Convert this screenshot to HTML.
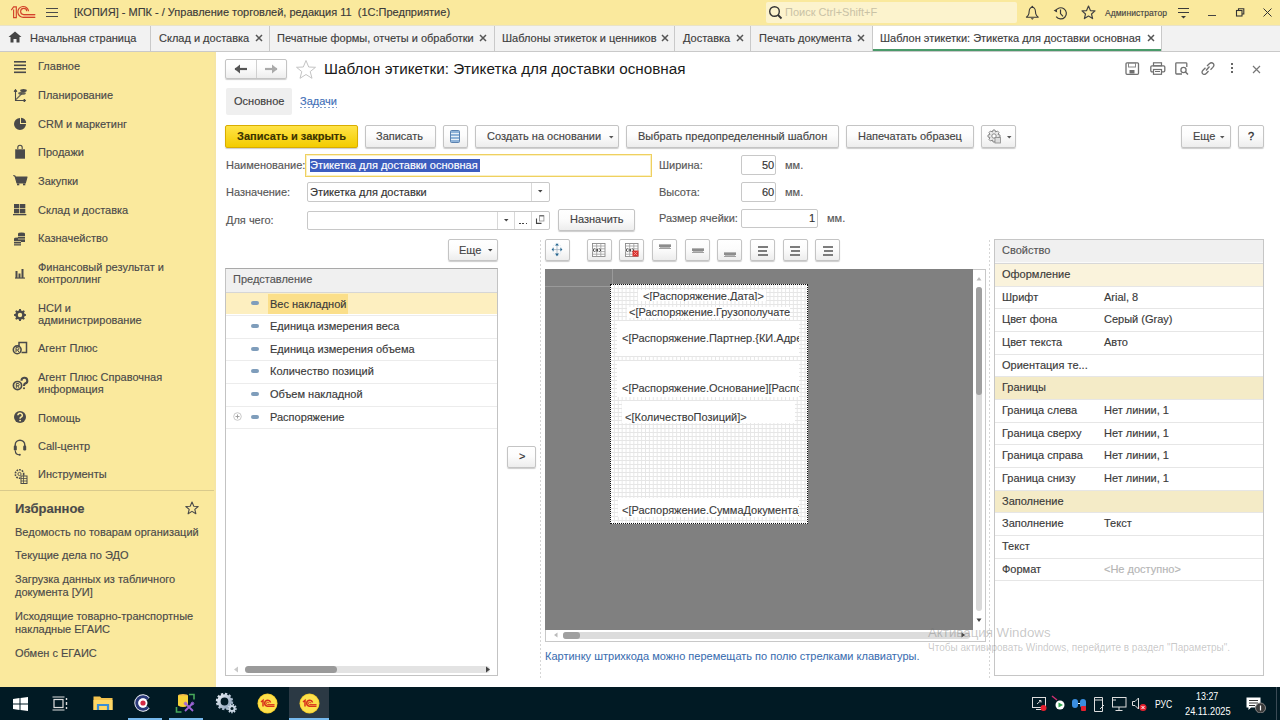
<!DOCTYPE html><html><head><meta charset="utf-8"><style>
*{margin:0;padding:0;box-sizing:border-box}
html,body{width:1280px;height:720px;overflow:hidden;background:#fff;font-family:"Liberation Sans",sans-serif;font-size:11px;color:#333333}
.t{position:absolute;white-space:nowrap;line-height:13px;-webkit-text-stroke:0.15px}
.r{position:absolute}
.btn{position:absolute;border:1px solid #c4c4c4;border-radius:2px;background:linear-gradient(#ffffff 0%,#fcfcfc 45%,#ededed 100%);box-shadow:0 1px 1px rgba(0,0,0,.2)}
.inp{position:absolute;border:1px solid #c8c8c8;border-radius:2px;background:#fff}
</style></head><body><div class="r" style="left:0px;top:0px;width:1280px;height:25px;background:#fae99d"></div><svg class="r" style="left:0px;top:0px;" width="40" height="25" viewBox="0 0 40 25"><g fill="none" stroke="#d2432a" stroke-width="1.15">
<path d="M11.3 10.2 L13.6 6.9 L16.3 6.9 L16.3 17.6 L13.6 17.6 L13.6 9.6"/>
<path d="M28.6 11.3 A5.4 5.4 0 1 0 23.6 17.3 L35.3 17.3"/>
<path d="M26.8 11.2 A3.1 3.1 0 1 0 23.6 14.6 L35.3 14.6"/>
</g><path d="M23.6 15.2 H35 V16.7 H23.6 Z" fill="#f08a70" opacity=".6"/></svg><div class="r" style="left:46px;top:8px;width:12px;height:1.4px;background:#4a4a4a"></div><div class="r" style="left:46px;top:12px;width:12px;height:1.4px;background:#4a4a4a"></div><div class="r" style="left:46px;top:16px;width:12px;height:1.4px;background:#4a4a4a"></div><div class="t" style="left:74px;top:6px;color:#3a3a3a;">[КОПИЯ] - МПК - / Управление торговлей, редакция 11&nbsp; (1С:Предприятие)</div><div class="r" style="left:766px;top:2px;width:251px;height:21px;background:#fcf3cd;border-radius:2px"></div><svg class="r" style="left:768px;top:5px;" width="16" height="16" viewBox="0 0 16 16"><circle cx="6.5" cy="6.5" r="4.8" fill="none" stroke="#333" stroke-width="1.4"/><path d="M10 10 L13.5 13.5" stroke="#333" stroke-width="1.8"/></svg><div class="t" style="left:785px;top:6px;color:#c9c2a6;-webkit-text-stroke:0">Поиск Ctrl+Shift+F</div><svg class="r" style="left:1025px;top:5px;" width="15" height="15" viewBox="0 0 15 15"><circle cx="7.3" cy="1.6" r="0.9" fill="#3a3a3a"/><path d="M7.3 2.3 Q4.6 2.5 4.2 6 L3.9 8.6 Q3.5 10.4 1.4 12.2 H13.2 Q11.1 10.4 10.7 8.6 L10.4 6 Q10 2.5 7.3 2.3 Z" fill="none" stroke="#3a3a3a" stroke-width="1.1" stroke-linejoin="round"/><path d="M5.6 13.2 H9 L7.3 14.8 Z" fill="#3a3a3a"/></svg><svg class="r" style="left:1053px;top:5px;" width="16" height="16" viewBox="0 0 16 16"><path d="M2.6 6.2 A5.6 5.6 0 1 1 3.2 11.6" fill="none" stroke="#3a3a3a" stroke-width="1.2"/><path d="M0.6 5.6 L3.6 3.9 L4.2 7.4 Z" fill="#3a3a3a"/><path d="M7.5 4.6 V8.6 L10 11.4" fill="none" stroke="#3a3a3a" stroke-width="1.2"/></svg><svg class="r" style="left:1081px;top:5px;" width="15" height="15" viewBox="0 0 15 15"><path d="M7.5 1 L9.4 5.6 L14 5.9 L10.5 9 L11.6 13.6 L7.5 11.1 L3.4 13.6 L4.5 9 L1 5.9 L5.6 5.6 Z" fill="none" stroke="#444" stroke-width="1.2" stroke-linejoin="round"/></svg><div class="t" style="left:1105px;top:8px;font-size:8.5px;line-height:10px;color:#444;letter-spacing:0.05px">Администратор</div><div class="r" style="left:1177.5px;top:8px;width:11.5px;height:1.3px;background:#3a3a3a"></div><div class="r" style="left:1177.5px;top:12px;width:11.5px;height:1.3px;background:#3a3a3a"></div><svg class="r" style="left:1181px;top:16px;" width="5" height="3" viewBox="0 0 5 3"><path d="M0 0 L5 0 L2.5 2.6 Z" fill="#3a3a3a"/></svg><div class="r" style="left:1208px;top:15px;width:8px;height:1px;background:#444"></div><svg class="r" style="left:1235px;top:8px;" width="10" height="9" viewBox="0 0 10 9"><rect x="1.5" y="2.5" width="5.5" height="5.5" fill="none" stroke="#333" stroke-width="1.1"/><path d="M3.5 2.5 L3.5 0.8 L8.8 0.8 L8.8 6 L7 6" fill="none" stroke="#333" stroke-width="1.1"/></svg><svg class="r" style="left:1263px;top:8px;" width="9" height="9" viewBox="0 0 9 9"><path d="M0.5 0.5 L8.5 8.5 M8.5 0.5 L0.5 8.5" stroke="#333" stroke-width="1"/></svg><div class="r" style="left:0px;top:25px;width:1280px;height:27px;background:#f2f2f2;border-top:1px solid #e9e3c8;border-bottom:1px solid #c9c9c9"></div><div class="r" style="left:150px;top:26px;width:1px;height:25px;background:#c9c9c9"></div><div class="r" style="left:269px;top:26px;width:1px;height:25px;background:#c9c9c9"></div><div class="r" style="left:494px;top:26px;width:1px;height:25px;background:#c9c9c9"></div><div class="r" style="left:674px;top:26px;width:1px;height:25px;background:#c9c9c9"></div><div class="r" style="left:750px;top:26px;width:1px;height:25px;background:#c9c9c9"></div><div class="r" style="left:872px;top:26px;width:1px;height:25px;background:#c9c9c9"></div><div class="r" style="left:1161px;top:26px;width:1px;height:25px;background:#c9c9c9"></div><div class="r" style="left:873px;top:26px;width:288px;height:25px;background:#fff"></div><div class="r" style="left:873px;top:49px;width:288px;height:2px;background:#4a9a6a"></div><svg class="r" style="left:8px;top:31px;" width="14" height="12" viewBox="0 0 14 12"><path d="M7 0.5 L13.5 6 L11.5 6 L11.5 11.5 L8.5 11.5 L8.5 8 L5.5 8 L5.5 11.5 L2.5 11.5 L2.5 6 L0.5 6 Z" fill="#444"/></svg><div class="t" style="left:30px;top:32px;color:#3d3d3d;">Начальная страница</div><div class="t" style="left:159px;top:32px;color:#3d3d3d;">Склад и доставка</div><svg class="r" style="left:255px;top:34px;" width="8" height="8" viewBox="0 0 8 8"><path d="M1 1 L7 7 M7 1 L1 7" stroke="#555" stroke-width="1.5"/></svg><div class="t" style="left:277px;top:32px;color:#3d3d3d;">Печатные формы, отчеты и обработки</div><svg class="r" style="left:479px;top:34px;" width="8" height="8" viewBox="0 0 8 8"><path d="M1 1 L7 7 M7 1 L1 7" stroke="#555" stroke-width="1.5"/></svg><div class="t" style="left:502px;top:32px;color:#3d3d3d;">Шаблоны этикеток и ценников</div><svg class="r" style="left:661px;top:34px;" width="8" height="8" viewBox="0 0 8 8"><path d="M1 1 L7 7 M7 1 L1 7" stroke="#555" stroke-width="1.5"/></svg><div class="t" style="left:683px;top:32px;color:#3d3d3d;">Доставка</div><svg class="r" style="left:736px;top:34px;" width="8" height="8" viewBox="0 0 8 8"><path d="M1 1 L7 7 M7 1 L1 7" stroke="#555" stroke-width="1.5"/></svg><div class="t" style="left:759px;top:32px;color:#3d3d3d;">Печать документа</div><svg class="r" style="left:857px;top:34px;" width="8" height="8" viewBox="0 0 8 8"><path d="M1 1 L7 7 M7 1 L1 7" stroke="#555" stroke-width="1.5"/></svg><div class="t" style="left:880px;top:32px;color:#3d3d3d;">Шаблон этикетки: Этикетка для доставки основная</div><svg class="r" style="left:1147px;top:34px;" width="8" height="8" viewBox="0 0 8 8"><path d="M1 1 L7 7 M7 1 L1 7" stroke="#555" stroke-width="1.5"/></svg><div class="r" style="left:0px;top:52px;width:216px;height:635px;background:#fae99d"></div><div class="r" style="left:214px;top:52px;width:2px;height:635px;background:#f6e6a4"></div><div class="t" style="left:38px;top:60px;color:#4a4a4a;">Главное</div><div class="t" style="left:38px;top:89px;color:#4a4a4a;">Планирование</div><div class="t" style="left:38px;top:118px;color:#4a4a4a;">CRM и маркетинг</div><div class="t" style="left:38px;top:146px;color:#4a4a4a;">Продажи</div><div class="t" style="left:38px;top:175px;color:#4a4a4a;">Закупки</div><div class="t" style="left:38px;top:204px;color:#4a4a4a;">Склад и доставка</div><div class="t" style="left:38px;top:232px;color:#4a4a4a;">Казначейство</div><div class="t" style="left:38px;top:261px;color:#4a4a4a;">Финансовый результат и</div><div class="t" style="left:38px;top:273px;color:#4a4a4a;">контроллинг</div><div class="t" style="left:38px;top:302px;color:#4a4a4a;">НСИ и</div><div class="t" style="left:38px;top:314px;color:#4a4a4a;">администрирование</div><div class="t" style="left:38px;top:342px;color:#4a4a4a;">Агент Плюс</div><div class="t" style="left:38px;top:371px;color:#4a4a4a;">Агент Плюс Справочная</div><div class="t" style="left:38px;top:383px;color:#4a4a4a;">информация</div><div class="t" style="left:38px;top:412px;color:#4a4a4a;">Помощь</div><div class="t" style="left:38px;top:440px;color:#4a4a4a;">Call-центр</div><div class="t" style="left:38px;top:468px;color:#4a4a4a;">Инструменты</div><div class="r" style="left:0px;top:490px;width:214px;height:1px;background:#d9ca8c"></div><div class="t" style="left:15px;top:501px;font-size:13px;line-height:15px;color:#4a4a4a;font-weight:bold;">Избранное</div><svg class="r" style="left:185px;top:501px;" width="14" height="14" viewBox="0 0 14 14"><path d="M7 1 L8.8 5.2 L13.2 5.5 L9.8 8.4 L10.9 12.8 L7 10.4 L3.1 12.8 L4.2 8.4 L0.8 5.5 L5.2 5.2 Z" fill="none" stroke="#4a4a4a" stroke-width="1.1" stroke-linejoin="round"/></svg><div class="t" style="left:15px;top:526px;color:#4a4a4a;">Ведомость по товарам организаций</div><div class="t" style="left:15px;top:549px;color:#4a4a4a;">Текущие дела по ЭДО</div><div class="t" style="left:15px;top:573px;color:#4a4a4a;">Загрузка данных из табличного</div><div class="t" style="left:15px;top:586px;color:#4a4a4a;">документа [УИ]</div><div class="t" style="left:15px;top:610px;color:#4a4a4a;">Исходящие товарно-транспортные</div><div class="t" style="left:15px;top:623px;color:#4a4a4a;">накладные ЕГАИС</div><div class="t" style="left:15px;top:647px;color:#4a4a4a;">Обмен с ЕГАИС</div><div class="r" style="left:0px;top:687px;width:1280px;height:33px;background:#011a24"></div><div class="btn" style="left:225px;top:59px;width:62px;height:20px"></div><div class="r" style="left:256px;top:60px;width:1px;height:18px;background:#d0d0d0"></div><svg class="r" style="left:234px;top:63px;" width="14" height="12" viewBox="0 0 14 12"><path d="M1 6 L13 6" stroke="#555" stroke-width="2.2"/><path d="M0.5 6 L6 1.5 L6 10.5 Z" fill="#555"/></svg><svg class="r" style="left:264px;top:63px;" width="14" height="12" viewBox="0 0 14 12"><path d="M1 6 L13 6" stroke="#aaa" stroke-width="2.2"/><path d="M13.5 6 L8 1.5 L8 10.5 Z" fill="#aaa"/></svg><svg class="r" style="left:295px;top:59px;" width="22" height="21" viewBox="0 0 22 21"><path d="M11 1.5 L13.7 8 L20.5 8.3 L15.2 12.6 L17 19.3 L11 15.5 L5 19.3 L6.8 12.6 L1.5 8.3 L8.3 8 Z" fill="none" stroke="#c4c4c4" stroke-width="1" stroke-linejoin="round"/></svg><div class="t" style="left:324px;top:60px;font-size:15.25px;line-height:18px;color:#1a1a1a;-webkit-text-stroke:0">Шаблон этикетки: Этикетка для доставки основная</div><svg class="r" style="left:1125px;top:62px;" width="15" height="13" viewBox="0 0 15 13"><rect x="1" y="0.8" width="12.5" height="11.5" rx="1" fill="none" stroke="#707070" stroke-width="1.3"/><rect x="3.5" y="1" width="7" height="4" fill="none" stroke="#888" stroke-width="1"/><rect x="4.5" y="8" width="5" height="3.5" fill="#707070"/></svg><svg class="r" style="left:1150px;top:62px;" width="16" height="13" viewBox="0 0 16 13"><rect x="3.5" y="0.8" width="8" height="3" fill="none" stroke="#707070" stroke-width="1.2"/><rect x="0.8" y="3.8" width="14" height="6" rx="1.2" fill="none" stroke="#707070" stroke-width="1.3"/><rect x="3.5" y="7.5" width="8" height="4.8" fill="#fff" stroke="#707070" stroke-width="1.2"/><path d="M5 9.5 L10 9.5" stroke="#707070"/></svg><svg class="r" style="left:1175px;top:62px;" width="15" height="13" viewBox="0 0 15 13"><path d="M7 12 L1.5 12 Q0.8 12 0.8 11.3 L0.8 1.5 Q0.8 0.8 1.5 0.8 L11 0.8 Q11.8 0.8 11.8 1.5 L11.8 5" fill="none" stroke="#707070" stroke-width="1.3"/><circle cx="8.5" cy="8" r="2.6" fill="none" stroke="#707070" stroke-width="1.3"/><path d="M10.5 10 L13 12.5" stroke="#707070" stroke-width="1.5"/></svg><svg class="r" style="left:1200px;top:62px;" width="15" height="13" viewBox="0 0 15 13"><path d="M6 8.5 L9.5 4.5" stroke="#707070" stroke-width="1.3"/><path d="M5.5 5.8 L3 8.3 Q1 10.5 3 12 Q4.8 13.2 6.5 11.2 L8.5 9" fill="none" stroke="#707070" stroke-width="1.3"/><path d="M7 4 L9.3 1.7 Q11.5 -0.2 13.2 1.5 Q14.8 3.3 12.8 5.4 L10.5 7.7" fill="none" stroke="#707070" stroke-width="1.3"/></svg><div class="r" style="left:1231px;top:63px;width:2px;height:2px;background:#666"></div><div class="r" style="left:1231px;top:67px;width:2px;height:2px;background:#666"></div><div class="r" style="left:1231px;top:71px;width:2px;height:2px;background:#666"></div><svg class="r" style="left:1252px;top:65px;" width="9" height="9" viewBox="0 0 9 9"><path d="M1 1 L8 8 M8 1 L1 8" stroke="#777" stroke-width="1.2"/></svg><div class="r" style="left:226px;top:88px;width:66px;height:27px;background:#efefef;border-radius:2px"></div><div class="t" style="left:234px;top:95px;color:#404040;">Основное</div><div class="t" style="left:300px;top:95px;color:#3f70b8;">Задачи</div><div class="r" style="left:300px;top:106.5px;width:37px;height:1px;background-image:linear-gradient(90deg,#7f9fd0 50%,transparent 50%);background-size:4px 1px"></div><div class="r" style="left:225px;top:125px;width:133px;height:23px;border:1px solid #d9ad00;border-radius:2px;background:linear-gradient(#ffe347,#f3cc00);box-shadow:0 1px 1px rgba(0,0,0,.2)"></div><div class="t" style="left:237px;top:130px;color:#3b3300;font-weight:bold;">Записать и закрыть</div><div class="btn" style="left:365px;top:125px;width:71px;height:23px;"></div><div class="t" style="left:376px;top:130px;color:#444;">Записать</div><div class="btn" style="left:443px;top:125px;width:25px;height:23px;"></div><svg class="r" style="left:450px;top:130px;" width="10" height="13" viewBox="0 0 10 13"><rect x="0.5" y="0.5" width="9" height="12" rx="1" fill="#8fb3d9" stroke="#5b82b0"/><path d="M1 3.5 H9 M1 6.5 H9 M1 9.5 H9" stroke="#e8f0f8" stroke-width="1"/></svg><div class="btn" style="left:475px;top:125px;width:144px;height:23px;"></div><div class="t" style="left:487px;top:130px;color:#444;">Создать на основании</div><svg class="r" style="left:608.5px;top:136px;" width="5" height="3" viewBox="0 0 5 3"><path d="M0 0 L4.5 0 L2.25 2.5 Z" fill="#555"/></svg><div class="btn" style="left:626px;top:125px;width:213px;height:23px;"></div><div class="t" style="left:638px;top:130px;color:#444;">Выбрать предопределенный шаблон</div><div class="btn" style="left:846px;top:125px;width:128px;height:23px;"></div><div class="t" style="left:858px;top:130px;color:#444;">Напечатать образец</div><div class="btn" style="left:981px;top:125px;width:35px;height:23px;"></div><svg class="r" style="left:987px;top:129px;" width="14" height="15" viewBox="0 0 14 15"><path d="M6 1 L8 1 L8.5 3 L10.5 2 L12 3.5 L11 5.5 L13 6 L13 8 L11 8.5 L12 10.5 L10.5 12 L8.5 11 L8 13 L6 13 L5.5 11 L3.5 12 L2 10.5 L3 8.5 L1 8 L1 6 L3 5.5 L2 3.5 L3.5 2 L5.5 3 Z" fill="#e8e8e8" stroke="#888" stroke-width="1"/><circle cx="7" cy="7" r="2.2" fill="#fff" stroke="#888"/><rect x="8" y="8.5" width="5.5" height="5.5" fill="#ddd" stroke="#888" stroke-width="0.8"/></svg><svg class="r" style="left:1006.5px;top:136px;" width="5" height="3" viewBox="0 0 5 3"><path d="M0 0 L4.5 0 L2.25 2.5 Z" fill="#555"/></svg><div class="btn" style="left:1181px;top:125px;width:50px;height:23px;"></div><div class="t" style="left:1193px;top:130px;color:#444;">Еще</div><svg class="r" style="left:1219.5px;top:136px;" width="5" height="3" viewBox="0 0 5 3"><path d="M0 0 L4.5 0 L2.25 2.5 Z" fill="#555"/></svg><div class="btn" style="left:1238px;top:125px;width:26px;height:23px;"></div><div class="t" style="left:1248px;top:130px;color:#333;-webkit-text-stroke:0.35px">?</div><div class="t" style="left:226px;top:159px;color:#575757;">Наименование:</div><div class="r" style="left:305px;top:154px;width:347px;height:23px;border:1px solid #efd060;box-shadow:inset 0 0 0 1px #fbf1c4;background:#fff"></div><div class="r" style="left:310px;top:159px;width:170px;height:13px;background:#3d5dbf"></div><div class="t" style="left:310px;top:159px;color:#fff;">Этикетка для доставки основная</div><div class="t" style="left:226px;top:186px;color:#575757;">Назначение:</div><div class="inp" style="left:307px;top:182px;width:243px;height:20px"></div><div class="r" style="left:531px;top:183px;width:1px;height:18px;background:#d8d8d8"></div><svg class="r" style="left:537.5px;top:190px;" width="5" height="3" viewBox="0 0 5 3"><path d="M0 0 L4.5 0 L2.25 2.5 Z" fill="#444"/></svg><div class="t" style="left:310px;top:186px;color:#333;">Этикетка для доставки</div><div class="t" style="left:226px;top:214px;color:#575757;">Для чего:</div><div class="inp" style="left:307px;top:211px;width:243px;height:19px"></div><div class="r" style="left:497px;top:212px;width:1px;height:17px;background:#d8d8d8"></div><div class="r" style="left:514px;top:212px;width:1px;height:17px;background:#d8d8d8"></div><div class="r" style="left:531px;top:212px;width:1px;height:17px;background:#d8d8d8"></div><svg class="r" style="left:503.5px;top:219px;" width="5" height="3" viewBox="0 0 5 3"><path d="M0 0 L4.5 0 L2.25 2.5 Z" fill="#444"/></svg><div class="r" style="left:519px;top:222.5px;width:1.8px;height:1.8px;background:#444"></div><div class="r" style="left:522.3px;top:222.5px;width:1.8px;height:1.8px;background:#444"></div><div class="r" style="left:525.6px;top:222.5px;width:1.8px;height:1.8px;background:#444"></div><svg class="r" style="left:535px;top:215px;" width="11" height="10" viewBox="0 0 11 10"><rect x="4.5" y="0.8" width="4.4" height="5.2" fill="none" stroke="#999" stroke-width="0.9"/><path d="M4.5 0.8 H8.9" stroke="#555" stroke-width="1"/><path d="M1.5 3.5 V8.4 H6.5" fill="none" stroke="#444" stroke-width="1.1"/></svg><div class="btn" style="left:558px;top:209px;width:77px;height:22px;"></div><div class="t" style="left:570px;top:213px;color:#444;">Назначить</div><div class="t" style="left:659px;top:159px;color:#575757;">Ширина:</div><div class="inp" style="left:741px;top:155px;width:35px;height:20px"></div><div class="t" style="left:762px;top:159px;color:#333;">50</div><div class="t" style="left:785px;top:159px;color:#575757;">мм.</div><div class="t" style="left:659px;top:186px;color:#575757;">Высота:</div><div class="inp" style="left:741px;top:182px;width:35px;height:20px"></div><div class="t" style="left:762px;top:186px;color:#333;">60</div><div class="t" style="left:785px;top:186px;color:#575757;">мм.</div><div class="t" style="left:659px;top:212px;color:#575757;">Размер ячейки:</div><div class="inp" style="left:741px;top:209px;width:77px;height:19px"></div><div class="t" style="left:809px;top:212px;color:#333;">1</div><div class="t" style="left:827px;top:212px;color:#575757;">мм.</div><div class="btn" style="left:448px;top:239px;width:50px;height:22px;"></div><div class="t" style="left:459px;top:244px;color:#444;">Еще</div><svg class="r" style="left:488px;top:249px;" width="5" height="3" viewBox="0 0 5 3"><path d="M0 0 L4.5 0 L2.25 2.5 Z" fill="#444"/></svg><div class="r" style="left:225px;top:268px;width:273px;height:408px;border:1px solid #c3c3c3;border-top-color:#a9a9a9;background:#fff"></div><div class="r" style="left:226px;top:269px;width:271px;height:24px;background:#f0f0f0;border-bottom:1px solid #d6d6d6"></div><div class="t" style="left:233px;top:273px;color:#555;">Представление</div><div class="r" style="left:226px;top:293px;width:271px;height:21px;background:#fdefc0"></div><div class="r" style="left:268px;top:294px;width:80px;height:19.5px;background:#fbdf8a"></div><div class="r" style="left:226px;top:315px;width:271px;height:1px;background:#ececec"></div><div class="r" style="left:251px;top:301px;width:8px;height:4px;background:#7f9dbb;border-radius:2px"></div><div class="t" style="left:270px;top:298px;color:#3a3a3a;">Вес накладной</div><div class="r" style="left:226px;top:338px;width:271px;height:1px;background:#ececec"></div><div class="r" style="left:251px;top:324px;width:8px;height:4px;background:#7f9dbb;border-radius:2px"></div><div class="t" style="left:270px;top:320px;color:#3a3a3a;">Единица измерения веса</div><div class="r" style="left:226px;top:360px;width:271px;height:1px;background:#ececec"></div><div class="r" style="left:251px;top:347px;width:8px;height:4px;background:#7f9dbb;border-radius:2px"></div><div class="t" style="left:270px;top:343px;color:#3a3a3a;">Единица измерения объема</div><div class="r" style="left:226px;top:383px;width:271px;height:1px;background:#ececec"></div><div class="r" style="left:251px;top:369px;width:8px;height:4px;background:#7f9dbb;border-radius:2px"></div><div class="t" style="left:270px;top:365px;color:#3a3a3a;">Количество позиций</div><div class="r" style="left:226px;top:406px;width:271px;height:1px;background:#ececec"></div><div class="r" style="left:251px;top:392px;width:8px;height:4px;background:#7f9dbb;border-radius:2px"></div><div class="t" style="left:270px;top:388px;color:#3a3a3a;">Объем накладной</div><div class="r" style="left:226px;top:428px;width:271px;height:1px;background:#ececec"></div><div class="r" style="left:251px;top:415px;width:8px;height:4px;background:#7f9dbb;border-radius:2px"></div><div class="t" style="left:270px;top:411px;color:#3a3a3a;">Распоряжение</div><svg class="r" style="left:233px;top:412px;" width="9" height="9" viewBox="0 0 9 9"><circle cx="4.5" cy="4.5" r="3.8" fill="#fff" stroke="#bbb" stroke-width="0.8"/><path d="M2.5 4.5 H6.5 M4.5 2.5 V6.5" stroke="#999" stroke-width="0.9"/></svg><svg class="r" style="left:233px;top:666px;" width="6" height="7" viewBox="0 0 6 7"><path d="M5 0.5 L1 3.5 L5 6.5 Z" fill="#c8c8c8"/></svg><div class="r" style="left:245px;top:666px;width:245px;height:7px;background:#e3e3e3;border-radius:4px"></div><div class="r" style="left:245px;top:666px;width:92px;height:7px;background:#9a9a9a;border-radius:4px"></div><svg class="r" style="left:485px;top:666px;" width="6" height="7" viewBox="0 0 6 7"><path d="M1 0.5 L5 3.5 L1 6.5 Z" fill="#444"/></svg><div class="btn" style="left:507px;top:446px;width:29px;height:22px;"></div><div class="t" style="left:519px;top:450px;color:#333;">&gt;</div><div class="r" style="left:540px;top:240px;width:1px;height:440px;background-image:linear-gradient(#d6d6d6 50%,transparent 50%);background-size:1px 4px"></div><div class="r" style="left:989px;top:240px;width:1px;height:440px;background-image:linear-gradient(#d6d6d6 50%,transparent 50%);background-size:1px 4px"></div><div class="btn" style="left:545px;top:239px;width:25px;height:22px;"></div><svg class="r" style="left:548px;top:241px;" width="19" height="18" viewBox="0 0 19 18"><ellipse cx="9" cy="8.6" rx="4.3" ry="6.3" fill="none" stroke="#cfe0ec" stroke-width="0.8" stroke-dasharray="1 1"/><path d="M9 3 V14.5 M4.5 8.6 H13.5" stroke="#9fb3c2" stroke-width="0.8"/><path d="M9 2.2 L11 4.6 L7 4.6 Z M9 15.2 L11 12.6 L7 12.6 Z M3.6 8.6 L5.6 6.6 L5.6 10.6 Z M14.4 8.6 L12.4 6.6 L12.4 10.6 Z" fill="#24658f"/></svg><div class="btn" style="left:587px;top:239px;width:25px;height:22px;"></div><div class="btn" style="left:619px;top:239px;width:25px;height:22px;"></div><div class="btn" style="left:652px;top:239px;width:25px;height:22px;"></div><div class="btn" style="left:685px;top:239px;width:25px;height:22px;"></div><div class="btn" style="left:717px;top:239px;width:25px;height:22px;"></div><div class="btn" style="left:750px;top:239px;width:25px;height:22px;"></div><div class="btn" style="left:783px;top:239px;width:25px;height:22px;"></div><div class="btn" style="left:815px;top:239px;width:25px;height:22px;"></div><svg class="r" style="left:592px;top:243px;" width="14" height="14" viewBox="0 0 14 14"><rect x="0.5" y="0.5" width="12.5" height="13" fill="#fff" stroke="#8a8a8a" stroke-width="0.9"/><path d="M0.5 3 H13 M0.5 5.8 H13 M0.5 8.6 H13 M0.5 11.2 H13 M4.7 0.5 V13.5 M8.8 0.5 V13.5" stroke="#9a9a9a" stroke-width="0.8"/><rect x="0.6" y="5.9" width="8" height="2.6" fill="#fff"/><path d="M2.6 5.8 L0.9 7.2 L2.6 8.6 M7.3 5.8 L9 7.2 L7.3 8.6" stroke="#222" fill="none" stroke-width="0.9"/><path d="M4.2 6 V8.5 M5.6 6 V8.5" stroke="#222" stroke-width="0.9"/></svg><svg class="r" style="left:625px;top:243px;" width="14" height="14" viewBox="0 0 14 14"><rect x="0.5" y="0.5" width="12.5" height="13" fill="#fff" stroke="#8a8a8a" stroke-width="0.9"/><path d="M0.5 3 H13 M0.5 5.8 H13 M0.5 8.6 H13 M0.5 11.2 H13 M4.7 0.5 V13.5 M8.8 0.5 V13.5" stroke="#9a9a9a" stroke-width="0.8"/><rect x="0.6" y="5.9" width="8" height="2.6" fill="#fff"/><path d="M2.6 5.8 L0.9 7.2 L2.6 8.6 M7.3 5.8 L9 7.2 L7.3 8.6" stroke="#222" fill="none" stroke-width="0.9"/><path d="M4.2 6 V8.5 M5.6 6 V8.5" stroke="#222" stroke-width="0.9"/><rect x="7.5" y="7.5" width="6" height="6" fill="#d9302c"/><path d="M8.8 8.8 L12.2 12.2 M12.2 8.8 L8.8 12.2" stroke="#f4a0a0" stroke-width="0.8"/></svg><div class="r" style="left:659px;top:244px;width:12px;height:1px;background:#b4b4b4"></div><div class="r" style="left:659px;top:245px;width:12px;height:2px;background:#8c8c8c"></div><div class="r" style="left:660px;top:247px;width:10px;height:1px;background:#b8b8b8"></div><div class="r" style="left:659px;top:248px;width:12px;height:1px;background:#a0a0a0"></div><div class="r" style="left:692px;top:248px;width:12px;height:1px;background:#b4b4b4"></div><div class="r" style="left:692px;top:249px;width:12px;height:2px;background:#8c8c8c"></div><div class="r" style="left:693px;top:251px;width:10px;height:1px;background:#b8b8b8"></div><div class="r" style="left:692px;top:252px;width:12px;height:1px;background:#a0a0a0"></div><div class="r" style="left:724px;top:252px;width:12px;height:1px;background:#b4b4b4"></div><div class="r" style="left:724px;top:253px;width:12px;height:2px;background:#8c8c8c"></div><div class="r" style="left:725px;top:255px;width:10px;height:1px;background:#b8b8b8"></div><div class="r" style="left:724px;top:256px;width:12px;height:1px;background:#a0a0a0"></div><div class="r" style="left:758px;top:246px;width:10px;height:1.6px;background:#7c7c7c"></div><div class="r" style="left:758px;top:250px;width:9px;height:1.6px;background:#7c7c7c"></div><div class="r" style="left:758px;top:254px;width:10px;height:1.6px;background:#7c7c7c"></div><div class="r" style="left:790px;top:246px;width:10px;height:1.6px;background:#7c7c7c"></div><div class="r" style="left:790.5px;top:250px;width:9px;height:1.6px;background:#7c7c7c"></div><div class="r" style="left:790px;top:254px;width:10px;height:1.6px;background:#7c7c7c"></div><div class="r" style="left:823px;top:246px;width:10px;height:1.6px;background:#7c7c7c"></div><div class="r" style="left:824px;top:250px;width:9px;height:1.6px;background:#7c7c7c"></div><div class="r" style="left:823px;top:254px;width:10px;height:1.6px;background:#7c7c7c"></div><div class="r" style="left:545px;top:269px;width:441px;height:373px;border:1px solid #c8c8c8;background:#fff"></div><div class="r" style="left:545px;top:269px;width:428px;height:361px;background:#808080"></div><div class="r" style="left:612px;top:269px;width:1px;height:15px;background:#9a9a9a"></div><div class="r" style="left:545px;top:286px;width:65px;height:1px;background:#9a9a9a"></div><div class="r" style="left:610px;top:284px;width:198px;height:240px;background-color:#fff;background-image:linear-gradient(90deg,#e6e6e6 1px,transparent 1px),linear-gradient(#e6e6e6 1px,transparent 1px);background-size:3.9px 4px;background-position:0 0"></div><div class="r" style="left:610px;top:284px;width:198px;height:240px;border:1px dotted #111"></div><div class="r" style="left:638px;top:290px;width:128px;height:11px;background:#fff;overflow:hidden"><div class="t" style="left:5px;top:0px;color:#3a3a3a;-webkit-text-stroke:0.1px">&lt;[Распоряжение.Дата]&gt;</div></div><div class="r" style="left:627px;top:307px;width:163px;height:11px;background:#fff;overflow:hidden"><div class="t" style="left:2px;top:-1px;color:#3a3a3a;-webkit-text-stroke:0.1px">&lt;[Распоряжение.Грузополучатель]&gt;</div></div><div class="r" style="left:617px;top:321px;width:182px;height:35px;background:#fff;overflow:hidden"><div class="t" style="left:5px;top:11px;color:#3a3a3a;-webkit-text-stroke:0.1px">&lt;[Распоряжение.Партнер.{КИ.Адрес}]&gt;</div></div><div class="r" style="left:617px;top:361px;width:182px;height:36px;background:#fff;overflow:hidden"><div class="t" style="left:5px;top:21px;color:#3a3a3a;-webkit-text-stroke:0.1px">&lt;[Распоряжение.Основание][Распоряжение]&gt;</div></div><div class="r" style="left:622px;top:401px;width:173px;height:22px;background:#fff;overflow:hidden"><div class="t" style="left:3px;top:10px;color:#3a3a3a;-webkit-text-stroke:0.1px">&lt;[КоличествоПозиций]&gt;</div></div><div class="r" style="left:618px;top:498px;width:181px;height:19px;background:#fff;overflow:hidden"><div class="t" style="left:4px;top:6px;color:#3a3a3a;-webkit-text-stroke:0.1px">&lt;[Распоряжение.СуммаДокумента]&gt;</div></div><svg class="r" style="left:976px;top:276px;" width="6" height="5" viewBox="0 0 6 5"><path d="M0.5 4.5 L3 1 L5.5 4.5 Z" fill="#bbb"/></svg><div class="r" style="left:976px;top:287px;width:6px;height:324px;background:#d9d9d9;border-radius:3px"></div><div class="r" style="left:976px;top:287px;width:6px;height:108px;background:#a0a0a0;border-radius:3px"></div><svg class="r" style="left:976px;top:618px;" width="6" height="5" viewBox="0 0 6 5"><path d="M0.5 0.5 L3 4 L5.5 0.5 Z" fill="#444"/></svg><svg class="r" style="left:553px;top:632px;" width="5" height="6" viewBox="0 0 5 6"><path d="M4.5 0.5 L1 3 L4.5 5.5 Z" fill="#bbb"/></svg><div class="r" style="left:563px;top:632px;width:407px;height:7px;background:#dcdcdc;border-radius:3px"></div><div class="r" style="left:563px;top:632px;width:17px;height:7px;background:#a0a0a0;border-radius:3px"></div><svg class="r" style="left:961px;top:632px;" width="5" height="6" viewBox="0 0 5 6"><path d="M0.5 0.5 L4 3 L0.5 5.5 Z" fill="#444"/></svg><div class="t" style="left:545px;top:650px;color:#3a6db0;-webkit-text-stroke:0.05px">Картинку штрихкода можно перемещать по полю стрелками клавиатуры.</div><div class="r" style="left:994px;top:239px;width:270px;height:437px;border:1px solid #c6c6c6;background:#fff"></div><div class="r" style="left:995px;top:240px;width:268px;height:24px;background:#f0f0f0;border-bottom:1px solid #d8d8d8;box-shadow:inset 0 -1px 0 #fafafa"></div><div class="t" style="left:1002px;top:244px;color:#555;">Свойство</div><div class="r" style="left:995px;top:264px;width:268px;height:22px;background:#faf3dc"></div><div class="r" style="left:995px;top:286px;width:268px;height:1px;background:#e6e6e6"></div><div class="t" style="left:1002px;top:268px;color:#3a3a3a;">Оформление</div><div class="r" style="left:995px;top:308px;width:268px;height:1px;background:#e6e6e6"></div><div class="t" style="left:1002px;top:291px;color:#3a3a3a;">Шрифт</div><div class="t" style="left:1104px;top:291px;color:#3a3a3a;">Arial, 8</div><div class="r" style="left:995px;top:331px;width:268px;height:1px;background:#e6e6e6"></div><div class="t" style="left:1002px;top:313px;color:#3a3a3a;">Цвет фона</div><div class="t" style="left:1104px;top:313px;color:#3a3a3a;">Серый (Gray)</div><div class="r" style="left:995px;top:354px;width:268px;height:1px;background:#e6e6e6"></div><div class="t" style="left:1002px;top:336px;color:#3a3a3a;">Цвет текста</div><div class="t" style="left:1104px;top:336px;color:#3a3a3a;">Авто</div><div class="r" style="left:995px;top:376px;width:268px;height:1px;background:#e6e6e6"></div><div class="t" style="left:1002px;top:359px;color:#3a3a3a;">Ориентация те...</div><div class="r" style="left:995px;top:377px;width:268px;height:22px;background:#f4ebc7"></div><div class="r" style="left:995px;top:399px;width:268px;height:1px;background:#e6e6e6"></div><div class="t" style="left:1002px;top:381px;color:#3a3a3a;">Границы</div><div class="r" style="left:995px;top:422px;width:268px;height:1px;background:#e6e6e6"></div><div class="t" style="left:1002px;top:404px;color:#3a3a3a;">Граница слева</div><div class="t" style="left:1104px;top:404px;color:#3a3a3a;">Нет линии, 1</div><div class="r" style="left:995px;top:444px;width:268px;height:1px;background:#e6e6e6"></div><div class="t" style="left:1002px;top:427px;color:#3a3a3a;">Граница сверху</div><div class="t" style="left:1104px;top:427px;color:#3a3a3a;">Нет линии, 1</div><div class="r" style="left:995px;top:467px;width:268px;height:1px;background:#e6e6e6"></div><div class="t" style="left:1002px;top:449px;color:#3a3a3a;">Граница справа</div><div class="t" style="left:1104px;top:449px;color:#3a3a3a;">Нет линии, 1</div><div class="r" style="left:995px;top:490px;width:268px;height:1px;background:#e6e6e6"></div><div class="t" style="left:1002px;top:472px;color:#3a3a3a;">Граница снизу</div><div class="t" style="left:1104px;top:472px;color:#3a3a3a;">Нет линии, 1</div><div class="r" style="left:995px;top:491px;width:268px;height:21px;background:#f4ebc7"></div><div class="r" style="left:995px;top:512px;width:268px;height:1px;background:#e6e6e6"></div><div class="t" style="left:1002px;top:495px;color:#3a3a3a;">Заполнение</div><div class="r" style="left:995px;top:535px;width:268px;height:1px;background:#e6e6e6"></div><div class="t" style="left:1002px;top:517px;color:#3a3a3a;">Заполнение</div><div class="t" style="left:1104px;top:517px;color:#3a3a3a;">Текст</div><div class="r" style="left:995px;top:558px;width:268px;height:1px;background:#e6e6e6"></div><div class="t" style="left:1002px;top:540px;color:#3a3a3a;">Текст</div><div class="r" style="left:995px;top:580px;width:268px;height:1px;background:#e6e6e6"></div><div class="t" style="left:1002px;top:563px;color:#3a3a3a;">Формат</div><div class="t" style="left:1104px;top:563px;color:#b5b5b5;">&lt;Не доступно&gt;</div><div class="t" style="left:928px;top:625px;font-size:13.3px;line-height:16px;color:rgba(110,110,110,.38);-webkit-text-stroke:0">Активация Windows</div><div class="t" style="left:928px;top:642px;font-size:10px;line-height:12px;color:rgba(110,110,110,.38);-webkit-text-stroke:0">Чтобы активировать Windows, перейдите в раздел "Параметры".</div><svg class="r" style="left:13px;top:697px;" width="15" height="14" viewBox="0 0 15 14"><path d="M0 2 L6.5 1 L6.5 6.5 L0 6.5 Z M7.5 0.9 L15 0 L15 6.5 L7.5 6.5 Z M0 7.5 L6.5 7.5 L6.5 13 L0 12 Z M7.5 7.5 L15 7.5 L15 14 L7.5 13.1 Z" fill="#fff"/></svg><svg class="r" style="left:52px;top:696px;" width="16" height="15" viewBox="0 0 16 15"><rect x="2" y="3.5" width="9" height="8" fill="none" stroke="#ddd" stroke-width="1.2"/><path d="M0.5 1 H12.5 M0.5 14 H12.5" stroke="#ddd" stroke-width="1.2"/><path d="M14.5 2 V4 M14.5 6 V9 M14.5 11 V13" stroke="#ddd" stroke-width="1.4"/></svg><svg class="r" style="left:93px;top:695px;" width="20" height="16" viewBox="0 0 20 16"><path d="M0.5 1.5 L7 1.5 L8.5 3 L19.5 3 L19.5 15 L0.5 15 Z" fill="#f3c34f"/><rect x="0.5" y="5" width="19" height="10" fill="#ffd866"/><path d="M5 15 L5 10 L15 10 L15 15" fill="none" stroke="#3c8fd6" stroke-width="2.2"/></svg><svg class="r" style="left:133px;top:693px;" width="20" height="20" viewBox="0 0 20 20"><path d="M14.83 5.95 A6.3 6.3 0 1 0 14.83 14.05" fill="none" stroke="#f4f6fb" stroke-width="4.8"/><path d="M14.83 5.95 A6.3 6.3 0 1 0 14.83 14.05" fill="none" stroke="#2b3a7a" stroke-width="3"/><circle cx="10" cy="10" r="4.5" fill="#fff"/><circle cx="10" cy="10" r="2.6" fill="#d42a45"/></svg><div class="r" style="left:128px;top:718px;width:34px;height:2px;background:#76b9ed"></div><svg class="r" style="left:175px;top:693px;" width="21" height="20" viewBox="0 0 21 20"><path d="M14 1.5 H19 V6.5 M1.5 14 V19 H6.5" fill="none" stroke="#47a85a" stroke-width="1.6"/><ellipse cx="8" cy="2.8" rx="5" ry="1.8" fill="#f3b94a"/><path d="M3 2.8 V12.5 Q8 15.5 13 12.5 V2.8" fill="#f7d23a"/><path d="M10 10 L18 18 M18 10 L10 18" stroke="#a066d8" stroke-width="1.8"/><circle cx="10.5" cy="10.5" r="1.3" fill="none" stroke="#a066d8"/><circle cx="17.5" cy="10.5" r="1.3" fill="none" stroke="#a066d8"/></svg><div class="r" style="left:169px;top:718px;width:34px;height:2px;background:#76b9ed"></div><svg class="r" style="left:215px;top:692px;" width="22" height="22" viewBox="0 0 22 22"><defs><linearGradient id="gg" x1="0" y1="0" x2="1" y2="1"><stop offset="0" stop-color="#e8eef5"/><stop offset="1" stop-color="#8aa0b8"/></linearGradient></defs><circle cx="9.5" cy="9.5" r="5.6" fill="none" stroke="url(#gg)" stroke-width="3.4"/><circle cx="9.5" cy="9.5" r="7.6" fill="none" stroke="url(#gg)" stroke-width="2.2" stroke-dasharray="2.3 1.7"/><circle cx="17" cy="16.5" r="2.6" fill="none" stroke="#c9d6e3" stroke-width="2"/><circle cx="17" cy="16.5" r="4" fill="none" stroke="#c9d6e3" stroke-width="1.5" stroke-dasharray="1.5 1.2"/></svg><svg class="r" style="left:257px;top:693px;" width="21" height="21" viewBox="0 0 21 21"><circle cx="10.5" cy="10.5" r="10" fill="#f2c927"/><circle cx="10.5" cy="10.5" r="9.2" fill="#fde14c"/><g fill="none" stroke="#d8321c" stroke-width="1.5"><path d="M4 9 L6 7.3 L6 13.5"/><path d="M13.6 9.5 A3 3 0 1 0 10.3 13.3 L17.5 13.3"/><path d="M11.8 10.3 A1.2 1.2 0 1 0 10.3 11.6 L17.5 11.6" stroke-width="1"/></g></svg><div class="r" style="left:289px;top:687px;width:40px;height:33px;background:#2b3944"></div><svg class="r" style="left:299px;top:693px;" width="21" height="21" viewBox="0 0 21 21"><circle cx="10.5" cy="10.5" r="10" fill="#f2c927"/><circle cx="10.5" cy="10.5" r="9.2" fill="#fde14c"/><g fill="none" stroke="#d8321c" stroke-width="1.5"><path d="M4 9 L6 7.3 L6 13.5"/><path d="M13.6 9.5 A3 3 0 1 0 10.3 13.3 L17.5 13.3"/><path d="M11.8 10.3 A1.2 1.2 0 1 0 10.3 11.6 L17.5 11.6" stroke-width="1"/></g></svg><div class="r" style="left:289px;top:718px;width:40px;height:2px;background:#76b9ed"></div><svg class="r" style="left:1032px;top:697px;" width="15" height="14" viewBox="0 0 15 14"><rect x="0.5" y="0.5" width="13" height="10" fill="none" stroke="#ddd"/><path d="M4 12.5 H10" stroke="#ddd"/><path d="M5 7 L9 3.5 M7 3.5 H9 V5.5" stroke="#ddd" fill="none"/><circle cx="11.5" cy="11" r="3" fill="#e5202e"/></svg><svg class="r" style="left:1051px;top:695px;" width="15" height="16" viewBox="0 0 15 16"><path d="M1 1 L6 5" stroke="#d03070" stroke-width="1.5"/><circle cx="9" cy="10" r="4.5" fill="#fff"/><path d="M7.5 7.5 L12 10 L7.5 12.5 Z" fill="#2fa84f"/></svg><svg class="r" style="left:1072px;top:697px;" width="15" height="14" viewBox="0 0 15 14"><rect x="0" y="2" width="6" height="9" rx="3" fill="#3a8ee0"/><rect x="8" y="2" width="6" height="9" rx="3" fill="#3a8ee0"/><path d="M6 6.5 H8" stroke="#fff"/><rect x="9" y="9" width="5" height="5" rx="1" fill="#e5202e"/></svg><svg class="r" style="left:1094px;top:697px;" width="11" height="15" viewBox="0 0 11 15"><path d="M0.5 0.5 H8.5 V14.5 H0.5 Z M0.5 3 H8.5" fill="none" stroke="#ddd"/><path d="M6 12 L10 8" stroke="#ddd"/></svg><svg class="r" style="left:1112px;top:697px;" width="15" height="14" viewBox="0 0 15 14"><rect x="0.5" y="0.5" width="13.5" height="9.5" fill="none" stroke="#ddd"/><path d="M7 10 V13 M3.5 13.5 H10.5 M0.5 3 H4" stroke="#ddd"/></svg><svg class="r" style="left:1132px;top:697px;" width="15" height="14" viewBox="0 0 15 14"><path d="M0.5 4.5 H3 L6.5 1 V12 L3 8.5 H0.5 Z" fill="none" stroke="#ddd"/><circle cx="11" cy="10.5" r="3.5" fill="#e5202e"/><path d="M9.5 9 L12.5 12 M12.5 9 L9.5 12" stroke="#fff"/></svg><div class="t" style="left:1155px;top:698px;color:#fff;-webkit-text-stroke:0;transform:scaleX(0.78);transform-origin:0 0">РУС</div><div class="t" style="left:1196px;top:690px;color:#fff;-webkit-text-stroke:0;transform:scaleX(0.81);transform-origin:0 0">13:27</div><div class="t" style="left:1185px;top:705px;color:#fff;-webkit-text-stroke:0;transform:scaleX(0.84);transform-origin:0 0">24.11.2025</div><svg class="r" style="left:1246px;top:697px;" width="21" height="16" viewBox="0 0 21 16"><path d="M0.5 0.5 H14.5 V10.5 H5 L2.5 13 V10.5 H0.5 Z" fill="#fff"/><path d="M3 3.5 H12 M3 6 H12 M3 8.5 H9" stroke="#333"/><circle cx="14.5" cy="11" r="5" fill="#3b3b3b" stroke="#888"/><path d="M14.5 8.5 V13.5" stroke="#fff" stroke-width="1.2"/></svg><div class="r" style="left:1276px;top:687px;width:1px;height:33px;background:#3a4a55"></div><svg class="r" style="left:0px;top:50px;" width="40" height="440" viewBox="0 0 40 440"><g fill="#4a4a4a" stroke="none">
<rect x="14" y="11" width="12" height="1.6"/><rect x="14" y="14.5" width="12" height="1.6"/><rect x="14" y="18" width="12" height="1.6"/><rect x="14" y="21.5" width="12" height="1.6"/>
</g>
<g fill="none" stroke="#4a4a4a">
<path d="M15.5 40 V50.5 H25" stroke-width="1.1"/><path d="M14.2 41.5 L15.5 39.3 L16.8 41.5 Z M24 49.2 L25.8 50.5 L24 51.8 Z" fill="#4a4a4a"/>
<path d="M16 49.5 L22 43.5" stroke-width="1.3" opacity=".8"/>
</g>
<g fill="#4a4a4a"><ellipse cx="23.5" cy="40.5" rx="3.3" ry="1.5"/><ellipse cx="22" cy="43.2" rx="3.8" ry="1.5" opacity=".85"/></g>
<path d="M20 68 A6 6 0 1 0 26 74 L20 74 Z" fill="#4a4a4a"/><path d="M21 67.8 A5.3 5.3 0 0 1 26.2 73 L21 73 Z" fill="#4a4a4a"/>
<path d="M17.8 99 V97.5 A2.2 2.2 0 0 1 22.2 97.5 V99" fill="none" stroke="#4a4a4a" stroke-width="1.1"/><rect x="15.2" y="99.3" width="9.8" height="9.4" fill="#4a4a4a"/>
<path d="M13.3 125.5 L15 126 L17 133 H25.3 L27 127 H15.5" fill="#4a4a4a" stroke="#4a4a4a" stroke-width="1.1" stroke-linejoin="round"/><rect x="17" y="133.5" width="2.3" height="1.8" fill="#4a4a4a"/><rect x="23" y="133.5" width="2.3" height="1.8" fill="#4a4a4a"/>
<g fill="#4a4a4a"><rect x="14" y="154" width="5.3" height="4.3"/><rect x="20" y="154" width="5.3" height="4.3"/><rect x="14" y="159" width="5.3" height="4.3"/><rect x="20" y="159" width="5.3" height="4.3"/><rect x="13" y="164" width="13.3" height="1.3"/></g>
<g fill="#4a4a4a"><ellipse cx="21.5" cy="183.8" rx="3.5" ry="1.3"/><rect x="18" y="184" width="7" height="8" /><ellipse cx="17.5" cy="188.8" rx="3.5" ry="1.3"/><rect x="14" y="189" width="7" height="6.5"/></g>
<path d="M18 186.5 H25 M18 189 H25 M14 191.5 H21 M14 193.8 H21" stroke="#fae99d" stroke-width="0.7"/>
<g fill="#4a4a4a"><rect x="15.5" y="221" width="2" height="7"/><rect x="18.5" y="223.5" width="2" height="4.5"/><rect x="21.5" y="219" width="2" height="9"/><rect x="15" y="227.5" width="10" height="1.1"/></g>
<path d="M19 257.6 L21 257.6 L21.4 259.4 L22.9 260.1 L24.4 259.1 L25.9 260.5 L24.9 262.1 L25.5 263.6 L27.3 264 L27.3 266 L25.5 266.4 L24.9 267.9 L25.9 269.5 L24.4 270.9 L22.9 269.9 L21.4 270.6 L21 272.4 L19 272.4 L18.6 270.6 L17.1 269.9 L15.6 270.9 L14.1 269.5 L15.1 267.9 L14.5 266.4 L12.7 266 L12.7 264 L14.5 263.6 L15.1 262.1 L14.1 260.5 L15.6 259.1 L17.1 260.1 L18.6 259.4 Z" fill="#4a4a4a" transform="translate(20,265) scale(0.82) translate(-20,-265)"/><circle cx="20" cy="265" r="2.2" fill="#fae99d"/>
<path d="M19 296.5 V292.5 H26.5 V302.5 H21.5" fill="none" stroke="#4a4a4a" stroke-width="1.5"/><circle cx="17.2" cy="299.8" r="3.9" fill="#fae99d" stroke="#4a4a4a" stroke-width="1.6"/><path d="M16 302 V297.6 H17.8 A1.15 1.15 0 0 1 17.8 299.9 H16 M17.4 299.9 L18.9 302" fill="none" stroke="#4a4a4a" stroke-width="1"/>
<path d="M21.5 330.8 A2.9 2.9 0 1 1 25.1 333.5 Q24 334.2 24 336" fill="none" stroke="#4a4a4a" stroke-width="2.1"/><circle cx="24" cy="338.2" r="1" fill="#4a4a4a"/><circle cx="17.5" cy="335.6" r="4.1" fill="#fae99d" stroke="#4a4a4a" stroke-width="1.7"/><path d="M16.3 337.9 V333.5 H18.1 A1.15 1.15 0 0 1 18.1 335.8 H16.3 M17.7 335.8 L19.1 337.9" fill="none" stroke="#4a4a4a" stroke-width="1"/>
<circle cx="20" cy="367" r="6" fill="#4a4a4a"/><path d="M17.9 365.3 A2.2 2.1 0 1 1 20.9 367.2 Q20.1 367.6 20.1 368.8" fill="none" stroke="#fae99d" stroke-width="1.5"/><circle cx="20.1" cy="370.6" r="0.95" fill="#fae99d"/>
<path d="M15.2 396.5 V395 A4.8 4.8 0 0 1 24.8 395 V396.5" fill="none" stroke="#4a4a4a" stroke-width="1.4"/><rect x="13.8" y="395.5" width="3" height="5" rx="1.2" fill="#4a4a4a"/><rect x="23.2" y="395.5" width="3" height="5" rx="1.2" fill="#4a4a4a"/><path d="M15.3 400.5 Q15.3 404.8 19.5 404.8" fill="none" stroke="#4a4a4a" stroke-width="1.2"/><circle cx="19.8" cy="404.8" r="1" fill="#4a4a4a"/>
<circle cx="19.5" cy="424" r="4.2" fill="none" stroke="#4a4a4a" stroke-width="1.6" stroke-dasharray="1.7 1"/><circle cx="19.5" cy="424" r="1.6" fill="none" stroke="#4a4a4a" stroke-width="0.9"/><rect x="21" y="426" width="6" height="7.5" fill="#fae99d" stroke="#4a4a4a" stroke-width="1"/><path d="M21 428.5 H27 M21 431 H27 M23.5 426 V433.5" stroke="#4a4a4a" stroke-width="0.8"/>
</svg></body></html>
